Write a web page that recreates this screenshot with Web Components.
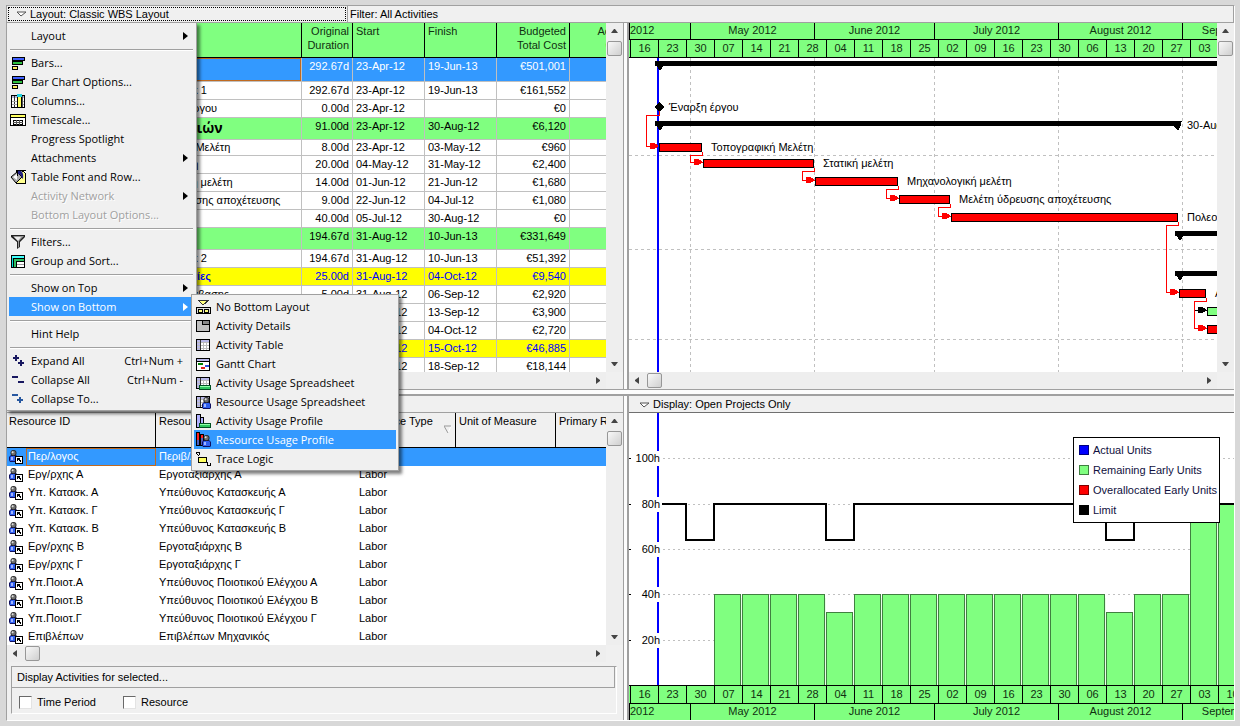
<!DOCTYPE html>
<html lang="en">
<head>
<meta charset="utf-8">
<title>Project layout</title>
<style>
  html { --face: #f0f0f0; --line: #a0a0a0; --green: #80ff80; --select: #3399ff; --text: #000; }
  body { margin: 0; background: #d8d8d8; font: 11px/14px "Liberation Sans", Arial, sans-serif; color: #000; }
</style>
</head>
<body>
<project-window></project-window>

<script>
const define = (name, html, setup) => {
  const template = document.createElement('template');
  template.innerHTML = html;
  customElements.define(name, class extends HTMLElement {
    constructor() {
      super();
      this.attachShadow({ mode: 'open' }).append(template.content.cloneNode(true));
    }
    connectedCallback() {
      if (setup && !this.ready) { this.ready = true; setup(this, this.shadowRoot); }
    }
  });
};

/* ---------- icons, 16 x 16 ---------- */
const r = (x, y, w, h, f) => `<rect x="${x}" y="${y}" width="${w}" height="${h}" fill="${f}"/>`;
const box = (x, y, w, h, f, b = '#000') => r(x, y, w, h, b) + r(x + 1, y + 1, w - 2, h - 2, f);
const gridIcon = box(1, 2, 14, 12, '#fff') + r(2, 3, 12, 2, '#b8b8e8') + r(2, 5, 3, 8, '#b8b8e8') +
  r(2, 5, 12, 1, '#bbb') + r(2, 8, 12, 1, '#bbb') + r(2, 11, 12, 1, '#bbb') + r(5, 3, 1, 10, '#333') + r(8, 5, 1, 8, '#bbb') + r(11, 5, 1, 8, '#bbb');
const person = (x, y) => `<g transform="translate(${x} ${y})" shape-rendering="auto">
  <path d="M0 10V7l2-2h5l2 2v4l-1 1H1z" fill="#101060"/><path d="M1 10V7l1-1h5l1 1v4H1z" fill="#3060f0"/><path d="M2 7h2v3H2z" fill="#a0b4ff"/>
  <circle cx="4.500" cy="3" r="3" fill="#222"/><circle cx="4.400" cy="3" r="2.300" fill="#707070"/><circle cx="3.600" cy="2.300" r="1" fill="#ddd"/></g>`;
const greenBar = box(4, 10, 12, 5, '#30c860', '#005020') + r(5, 11, 10, 1, '#90ffa8');
const icons = {
  bars: box(2, 2, 13, 4, '#4060ff') + box(2, 6, 11, 4, '#30c040') + box(2, 11, 6, 4, '#ffe860'),
  columns: box(1, 2, 14, 13, '#fff') + r(2, 3, 12, 2, '#b8b8d8') + r(4, 3, 1, 11, '#333') + r(2, 8, 12, 1, '#aaa') + r(2, 11, 12, 1, '#aaa') +
    r(12, 3, 1, 11, '#555') + box(7, 1, 5, 14, '#ffff60') + r(7, 1, 5, 3, '#20d0e0'),
  timescale: box(0, 2, 16, 12, '#fff') + r(1, 3, 14, 2, '#ffff60') + r(1, 5, 14, 1, '#000') + box(3, 8, 10, 5, '#fff') + r(6, 8, 1, 5, '#555') + r(9, 8, 1, 5, '#555') + r(3, 10, 10, 1, '#555'),
  font: `${box(6, 1, 10, 14, '#ffff90')}<path d="M11 1h5v4l-2-2z" fill="#fff" stroke="#000"/><g shape-rendering="auto"><path d="M1 8l6-5 5 5-6 6z" fill="#aaa" stroke="#000"/><path d="M3 8l4-3v6z" fill="#fff"/><path d="M8 2c4-1 6 2 5 8-2-1-1-5-5-5z" fill="#202080"/></g><path d="M7 1v6" stroke="#000"/>`,
  filter: `<g shape-rendering="auto"><path d="M1 1h14v2l-5 5v5l-3 2V8L1 3z" fill="#222"/><path d="M3 2h11L9 7v6l-1 1V7z" fill="#999"/><path d="M4 3h7L8 7z" fill="#eee"/></g>`,
  group: box(1, 2, 14, 13, '#00e0e0') + r(2, 3, 12, 2, '#40ffff') + box(3, 5, 12, 10, '#30c060') + box(6, 8, 9, 7, '#fff') + r(7, 11, 7, 1, '#999'),
  expand: r(3, 4, 6, 2, '#181860') + r(5, 2, 2, 6, '#181860') + r(8, 9, 6, 2, '#181860') + r(10, 7, 2, 6, '#181860'),
  collapse: r(2, 4, 6, 2, '#181860') + r(8, 9, 6, 2, '#181860'),
  collapseTo: r(2, 3, 6, 2, '#2858a0') + r(7, 8, 6, 2, '#2858a0') + r(9, 6, 2, 6, '#2858a0'),
  none: `<path d="M3 1h11L8 6z" fill="#ffff80" stroke="#333"/>${box(1, 8, 15, 7, '#ddd')}${box(3, 10, 5, 4, '#ffff80')}${box(9, 10, 5, 4, '#ffff80')}`,
  details: box(1, 2, 14, 12, '#c0c0c0') + r(7, 3, 7, 3, '#888') + r(7, 3, 1, 3, '#000') + r(7, 6, 7, 1, '#000'),
  table: gridIcon,
  gantt: box(1, 2, 14, 13, '#fff') + r(2, 3, 12, 2, '#b8b8e8') + r(1, 5, 14, 1, '#000') + r(3, 7, 5, 2, '#008000') + r(6, 11, 4, 2, '#e02020') + r(10, 9, 4, 2, '#3050e0'),
  actSheet: gridIcon + greenBar,
  resSheet: gridIcon + person(7, 3),
  actProfile: box(1, 1, 5, 14, '#b0b0ff') + box(5, 4, 4, 11, '#b0b0ff') + greenBar,
  resProfile: box(1, 0, 4, 14, '#5060c0') + r(2, 1, 2, 7, '#ff2020') + box(5, 2, 4, 12, '#5060c0') + r(6, 3, 2, 3, '#ff2020') + person(7, 3),
  trace: `${box(3, 6, 9, 6, '#ffff60')}<path d="M1 1h3v3M1 2l3 3M12 11v3h3M15 12v3" fill="none" stroke="#000"/>`,
  resource: person(1, 1) + box(7, 7, 8, 8, '#fff') + `<path d="M9 9h3v1h-1l2 2-1 1-2-2v1H9z" fill="#000"/>`
};
const icon = name => `<svg width="16" height="16" viewBox="0 0 16 16" shape-rendering="crispEdges" aria-hidden="true">${icons[name] || ''}</svg>`;

/* ---------- scroll bar ---------- */
define('scroll-bar', `
<style>
  :host { display: flex; background: #eee; }
  :host([vertical]) { flex-direction: column; width: 17px; }
  :host(:not([vertical])) { height: 17px; }
  button { all: unset; flex: none; width: 17px; height: 17px; display: grid; place-items: center; }
  .thumb { flex: none; width: 15px; height: 15px; margin: 1px; box-sizing: border-box; border: 1px solid #979797; border-radius: 2px; background: linear-gradient(135deg, #f8f8f8, #cfcfcf); }
  .gap { flex: 1; }
  svg { fill: #444; }
  :host([vertical]) svg { transform: rotate(90deg); }
</style>
<button aria-label="Scroll back"><svg width="7" height="7"><path d="M5 0v7L1 4V3z"/></svg></button>
<div class="thumb"></div><div class="gap"></div>
<button aria-label="Scroll forward"><svg width="7" height="7"><path d="M2 0v7l4-3V3z"/></svg></button>`);

/* ---------- menus ---------- */
define('menu-list', `
<style>
  :host { display: block; box-sizing: border-box; position: absolute; padding: 2px; background: var(--face); border: 1px solid var(--line); box-shadow: 3px 3px 3px rgba(0,0,0,.5); font: 11px/19px "Open Sans", "Noto Sans", sans-serif; }
</style>
<div role="menu"><slot></slot></div>`);

define('menu-item', `
<style>
  :host { display: block; position: relative; color: #000; }
  button { all: unset; box-sizing: border-box; width: 100%; height: 19px; padding: 0 9px 0 1px; display: flex; align-items: center; gap: 5px; white-space: nowrap; }
  :host([active]) button { background: var(--select); color: #fff; }
  :host([disabled]) button { color: #a0a0a0; text-shadow: 1px 1px #fff; }
  svg { flex: none; }
  .icon { display: contents; }
  .label { flex: 1; }
  .key { padding-right: 2px; }
  .key:empty, .arrow { display: none; }
  :host([more]) .arrow { display: block; fill: #000; margin-right: -3px; }
  :host([more][active]) .arrow { fill: #fff; }
</style>
<button role="menuitem"><span class="icon"></span><span class="label"><slot></slot></span><span class="key"></span><svg class="arrow" width="5" height="8"><path d="M0 0l5 4-5 4z"/></svg></button>
<slot name="submenu"></slot>`,
(el, root) => {
  root.querySelector('.icon').innerHTML = icon(el.getAttribute('icon'));
  root.querySelector('.key').textContent = el.getAttribute('key') || '';
});

define('menu-separator', `
<style>:host { display: block; height: 8px; padding: 4px 1px 2px; box-sizing: border-box; } hr { margin: 0; border: 0; height: 1px; background: var(--line); border-bottom: 1px solid #fff; }</style><hr>`);

/* ---------- layout bar with its open menu ---------- */
define('layout-bar', `
<style>
  :host { display: flex; position: relative; z-index: 5; box-sizing: border-box; height: 17px; background: var(--face); border-bottom: 1px solid var(--line); border-right: 1px solid var(--line); }
  .drop { all: unset; box-sizing: border-box; flex: none; width: 338px; height: 14px; margin: 1px; border: 1px dotted #000; display: flex; align-items: center; gap: 4px; padding-left: 8px; }
  .filter { border-left: 1px solid var(--line); padding-left: 2px; line-height: 16px; }
  .main { left: -1px; top: 16px; width: 191px; padding-top: 3px; }
  .sub { left: 182px; top: -3px; width: 208px; }
</style>
<button class="drop" aria-expanded="true"><svg width="9" height="6"><path d="M0 1h9L4 5z" fill="#fff" stroke="#555"/></svg>Layout: Classic WBS Layout</button>
<span class="filter">Filter: All Activities</span>
<menu-list class="main">
  <menu-item more>Layout</menu-item>
  <menu-separator></menu-separator>
  <menu-item icon="bars">Bars...</menu-item>
  <menu-item icon="bars">Bar Chart Options...</menu-item>
  <menu-item icon="columns">Columns...</menu-item>
  <menu-item icon="timescale">Timescale...</menu-item>
  <menu-item>Progress Spotlight</menu-item>
  <menu-item more>Attachments</menu-item>
  <menu-item icon="font">Table Font and Row...</menu-item>
  <menu-item disabled more>Activity Network</menu-item>
  <menu-item disabled>Bottom Layout Options...</menu-item>
  <menu-separator></menu-separator>
  <menu-item icon="filter">Filters...</menu-item>
  <menu-item icon="group">Group and Sort...</menu-item>
  <menu-separator></menu-separator>
  <menu-item more>Show on Top</menu-item>
  <menu-item more active>Show on Bottom
    <menu-list class="sub" slot="submenu">
      <menu-item icon="none">No Bottom Layout</menu-item>
      <menu-item icon="details">Activity Details</menu-item>
      <menu-item icon="table">Activity Table</menu-item>
      <menu-item icon="gantt">Gantt Chart</menu-item>
      <menu-item icon="actSheet">Activity Usage Spreadsheet</menu-item>
      <menu-item icon="resSheet">Resource Usage Spreadsheet</menu-item>
      <menu-item icon="actProfile">Activity Usage Profile</menu-item>
      <menu-item icon="resProfile" active>Resource Usage Profile</menu-item>
      <menu-item icon="trace">Trace Logic</menu-item>
    </menu-list>
  </menu-item>
  <menu-separator></menu-separator>
  <menu-item>Hint Help</menu-item>
  <menu-separator></menu-separator>
  <menu-item icon="expand" key="Ctrl+Num +">Expand All</menu-item>
  <menu-item icon="collapse" key="Ctrl+Num -">Collapse All</menu-item>
  <menu-item icon="collapseTo">Collapse To...</menu-item>
</menu-list>`);

/* ---------- activity table ---------- */
const activities = [
  ['selected tall', 3, '', '292.67d', '23-Apr-12', '19-Jun-13', '€501,001'],
  ['', 3, 'Net Hammock 1', '292.67d', '23-Apr-12', '19-Jun-13', '€161,552'],
  ['', 3, 'Έναρξη του έργου', '0.00d', '23-Apr-12', '', '€0'],
  ['wbs', 3, 'Φάση αδειών', '91.00d', '23-Apr-12', '30-Aug-12', '€6,120'],
  ['short', 3, 'Τοπογραφική Μελέτη', '8.00d', '23-Apr-12', '03-May-12', '€960'],
  ['', 3, 'Στατική μελέτη', '20.00d', '04-May-12', '31-May-12', '€2,400'],
  ['', 3, 'Μηχανολογική μελέτη', '14.00d', '01-Jun-12', '21-Jun-12', '€1,680'],
  ['', 3, 'Μελέτη ύδρευσης αποχέτευσης', '9.00d', '22-Jun-12', '04-Jul-12', '€1,080'],
  ['', 3, '', '40.00d', '05-Jul-12', '30-Aug-12', '€0'],
  ['wbs', 3, '', '194.67d', '31-Aug-12', '10-Jun-13', '€331,649'],
  ['', 3, 'Net Hammock 2', '194.67d', '31-Aug-12', '10-Jun-13', '€51,392'],
  ['phase', 3, 'Οι προεργασίες', '25.00d', '31-Aug-12', '04-Oct-12', '€9,540'],
  ['', 3, 'Εργασίες κατάβασης', '5.00d', '31-Aug-12', '06-Sep-12', '€2,920'],
  ['', 3, '', '5.00d', '07-Sep-12', '13-Sep-12', '€3,900'],
  ['', 3, '', '20.00d', '07-Sep-12', '04-Oct-12', '€2,720'],
  ['phase', 3, '', '32.00d', '31-Aug-12', '15-Oct-12', '€46,885'],
  ['', 3, '', '13.00d', '31-Aug-12', '18-Sep-12', '€18,144']
];
define('activity-table', `
<style>
  :host { display: block; overflow: hidden; background: #fff; }
  table { border-collapse: separate; border-spacing: 0; table-layout: fixed; width: 625px; }
  th, td { box-sizing: border-box; padding: 0 3px; text-align: left; vertical-align: top; white-space: nowrap; overflow: hidden; border-right: 1px solid silver; }
  th { font-weight: normal; height: 35px; padding-top: 1px; background: var(--green); border-right-color: #000; border-bottom: 1px solid #000; color: #103010; }
  td { height: 18px; line-height: 16px; border-bottom: 1px solid silver; }
  .num { text-align: right; }
  .short td { height: 16px; line-height: 15px; }
  .tall td { height: 24px; }
  .selected td { background: var(--select); color: #fff; }
  .selected td:first-child { box-shadow: inset 0 0 0 1px #c06a20; }
  .wbs td { height: 22px; background: var(--green); }
  .wbs td:first-child { font: bold 14px/20px "Open Sans", sans-serif; }
  .phase td { background: #ff0; color: #00f; }
  .phase td:first-child { font-weight: bold; }
  .level3 { padding-left: 121px; }
</style>
<table>
  <colgroup><col style="width:295px"><col style="width:51px"><col style="width:72px"><col style="width:72px"><col style="width:73px"><col style="width:62px"></colgroup>
  <thead><tr><th></th><th class="num">Original<br>Duration</th><th>Start</th><th>Finish</th><th class="num">Budgeted<br>Total Cost</th><th class="num">Actual<br>Cost</th></tr></thead>
  <tbody></tbody>
</table>`,
(el, root) => {
  root.querySelector('tbody').innerHTML = activities.map(([kind, level, name, dur, start, finish, cost]) =>
    `<tr class="${kind}"><td class="level${level}">${name}</td><td class="num">${dur}</td><td>${start}</td><td>${finish}</td><td class="num">${cost}</td><td></td></tr>`).join('');
});

/* ---------- time scale ---------- */
define('time-scale', `
<style>
  :host { display: flex; flex-direction: column; height: 35px; overflow: hidden; background: var(--green); color: #103010; box-sizing: border-box; }
  :host([below]) { flex-direction: column-reverse; }
  .row { display: flex; text-align: center; box-sizing: border-box; }
  .row > span { flex: none; box-sizing: border-box; border-left: 1px solid #000; }
  .months { height: 16px; line-height: 15px; }
  .weeks { height: 19px; line-height: 17px; border: solid #000; border-width: 1px 0; padding-left: 1px; }
  .weeks > span { width: 28px; }
  .months > span:first-child { text-align: left; }
</style>
<div class="row months"></div><div class="row weeks"></div>`,
(el, root) => {
  const months = [['2012', 61], ['May 2012', 124], ['June 2012', 120], ['July 2012', 124], ['August 2012', 124], ['September 2012', 120]];
  root.querySelector('.months').innerHTML = months.map(([m, w]) => `<span style="width:${w}px">${m}</span>`).join('');
  root.querySelector('.weeks').innerHTML = '16 23 30 07 14 21 28 04 11 18 25 02 09 16 23 30 06 13 20 27 03 10'.split(' ').map(w => `<span>${w}</span>`).join('');
});

/* ---------- gantt chart ---------- */
define('gantt-chart', `
<style>
  :host { display: flex; flex-direction: column; overflow: hidden; background: #fff; }
  svg { display: block; flex: 1; min-height: 0; width: 100%; font: 11px "Liberation Sans", Arial, sans-serif; }
</style>
<time-scale></time-scale>
<svg role="img" aria-label="Gantt chart"><g transform="translate(-629 -58)" shape-rendering="crispEdges"></g></svg>`,
(el, root) => {
  const out = [];
  const months = [690, 814, 934, 1058, 1182];
  months.forEach(x => out.push(`<path d="M${x} 58v600" stroke="silver" stroke-dasharray="3 3"/>`));
  [155, 249, 339].forEach(y => out.push(`<path d="M629 ${y}h1400" stroke="silver" stroke-dasharray="3 3"/>`));
  out.push(r(657, 58, 2, 600, '#00f'));
  const summary = (x, y, end) => {
    out.push(r(x, y, end - x, 5, '#000'), `<path d="M${x} ${y}h8v5l-2 4h-2z"/>`);
    if (end < 1200) out.push(`<path d="M${end + 1} ${y}l-3 9h-2l-4-5z"/>`);
  };
  summary(655, 61, 2000);
  summary(655, 121, 1181);
  summary(1175, 231, 2000);
  summary(1175, 271, 2000);
  out.push('<path d="M659 102l5 5-5 5-5-5z"/>');
  const bar = (x, y, end, color = '#f00') => out.push(box(x, y, end - x, 9, color));
  const link = (d, x, y, color = '#f00') => out.push(`<path d="${d}" fill="none" stroke="${color}"/><path d="M${x - 9} ${y - 3}h4l4 2v2l-4 2h-4z" fill="${color}"/>`);
  link('M659 111v4H646v31h12', 659, 146);
  [[659, 143, 702], [703, 159, 814], [815, 177, 898], [899, 195, 950], [951, 213, 1178]].forEach(([x, y, end], i, all) => {
    bar(x, y, end);
    const next = all[i + 1];
    if (next) link(`M${end} ${y + 9}v3h-12V${next[1] + 3}H${next[0]}`, next[0], next[1] + 3);
  });
  link('M1178 222v3h-12v67h13', 1179, 292);
  bar(1179, 289, 1206);
  link('M1206 298v3h-12v27h13', 1207, 328);
  link('M1195 310h12', 1207, 310, '#000');
  bar(1207, 307, 1260, '#80ff80');
  bar(1207, 325, 1260);
  [['Έναρξη έργου', 669, 111], ['30-Aug-12', 1187, 129], ['Τοπογραφική Μελέτη', 711, 151], ['Στατική μελέτη', 823, 167],
   ['Μηχανολογική μελέτη', 907, 185], ['Μελέτη ύδρευσης αποχέτευσης', 959, 203], ['Πολεοδομία', 1187, 221], ['Α', 1215, 297]]
    .forEach(([t, x, y]) => out.push(`<text x="${x}" y="${y}">${t}</text>`));
  root.querySelector('g').innerHTML = out.join('');
});

/* ---------- resource table ---------- */
const resources = [
  ['Περ/λογος', 'Περιβ/λόγος', 'Labor'], ['Εργ/ρχης Α', 'Εργοταξιάρχης Α', 'Labor'], ['Υπ. Κατασκ. Α', 'Υπεύθυνος Κατασκευής Α', 'Labor'],
  ['Υπ. Κατασκ. Γ', 'Υπεύθυνος Κατασκευής Γ', 'Labor'], ['Υπ. Κατασκ. Β', 'Υπεύθυνος Κατασκευής Β', 'Labor'], ['Εργ/ρχης Β', 'Εργοταξιάρχης Β', 'Labor'],
  ['Εργ/ρχης Γ', 'Εργοταξιάρχης Γ', 'Labor'], ['Υπ.Ποιοτ.Α', 'Υπεύθυνος Ποιοτικού Ελέγχου Α', 'Labor'], ['Υπ.Ποιοτ.Β', 'Υπεύθυνος Ποιοτικού Ελέγχου Β', 'Labor'],
  ['Υπ.Ποιοτ.Γ', 'Υπεύθυνος Ποιοτικού Ελέγχου Γ', 'Labor'], ['Επιβλέπων', 'Επιβλέπων Μηχανικός', 'Labor']
];
define('resource-table', `
<style>
  :host { display: block; overflow: hidden; background: #fff; }
  table { border-collapse: separate; border-spacing: 0; table-layout: fixed; width: 669px; }
  th, td { box-sizing: border-box; padding: 0 3px; text-align: left; vertical-align: top; white-space: nowrap; overflow: hidden; }
  th { height: 35px; padding: 1px 2px; font-weight: normal; background: var(--face); border: solid #000; border-width: 0 1px 1px 0; }
  th + th { padding-left: 3px; }
  td { height: 18px; line-height: 17px; }
  .id { padding: 0; }
  .id div { display: flex; height: 18px; gap: 2px; padding-left: 1px; }
  .id svg { padding-top: 1px; }
  .id span { flex: 1; padding-left: 2px; }
  .selected td { background: var(--select); color: #fff; }
  .selected .id span { border: 1px solid #c06a20; padding-left: 1px; line-height: 15px; }
  .sort { float: right; margin: 11px 1px 0 0; }
</style>
<table>
  <colgroup><col style="width:149px"><col style="width:200px"><col style="width:100px"><col style="width:100px"><col style="width:120px"></colgroup>
  <thead><tr><th>Resource ID</th><th>Resource Name</th><th>Resource Type<svg class="sort" width="8" height="9"><path d="M7 1L4 8" stroke="#fff"/><path d="M7 1H0l4 7" fill="none" stroke="#999"/></svg></th><th>Unit of Measure</th><th>Primary Role</th></tr></thead>
  <tbody></tbody>
</table>`,
(el, root) => {
  root.querySelector('tbody').innerHTML = resources.map(([id, name, type], i) =>
    `<tr class="${i ? '' : 'selected'}"><td class="id"><div>${icon('resource')}<span>${id}</span></div></td><td>${name}</td><td>${type}</td><td></td><td></td></tr>`).join('');
});

/* ---------- selection panel ---------- */
define('selection-panel', `
<style>
  :host { display: block; padding: 4px 6px 6px 4px; height: 58px; box-sizing: border-box; background: var(--face); }
  fieldset { margin: 0; padding: 0; height: 48px; box-sizing: border-box; border: 1px solid; border-color: var(--line) #fff #fff var(--line); }
  .title { height: 20px; line-height: 20px; padding-left: 5px; border: solid var(--line); border-width: 0 1px 1px 0; margin-right: 1px; }
  .checks { display: flex; padding-left: 7px; }
  label { display: flex; align-items: center; height: 28px; gap: 5px; width: 104px; }
  input { appearance: none; margin: 0; width: 13px; height: 13px; box-sizing: border-box; background: #fff; border: 1px solid; border-color: #696969 #e3e3e3 #e3e3e3 #696969; }
</style>
<fieldset aria-labelledby="t">
  <div class="title" id="t">Display Activities for selected...</div>
  <div class="checks"><label><input type="checkbox">Time Period</label><label><input type="checkbox">Resource</label></div>
</fieldset>`);

/* ---------- legend ---------- */
define('chart-legend', `
<style>
  :host { display: block; position: absolute; top: 24px; right: 14px; box-sizing: border-box; width: 147px; padding: 2px 0 2px 5px; background: #fff; border: 1px solid #000; color: #101040; }
  ul { margin: 0; padding: 0; list-style: none; }
  li { display: flex; align-items: center; gap: 4px; height: 20px; white-space: nowrap; }
  i { flex: none; width: 10px; height: 10px; box-sizing: border-box; border: 1px solid rgba(0,0,0,.5); }
</style>
<ul>
  <li><i style="background:#00f"></i>Actual Units</li>
  <li><i style="background:#80ff80"></i>Remaining Early Units</li>
  <li><i style="background:#f00"></i>Overallocated Early Units</li>
  <li><i style="background:#000"></i>Limit</li>
</ul>`);

/* ---------- resource usage profile ---------- */
define('usage-profile', `
<style>
  :host { display: flex; flex-direction: column; position: relative; overflow: hidden; background: #fff; }
  svg { display: block; flex: 1; min-height: 0; width: 100%; font: 11px "Liberation Sans", Arial, sans-serif; }
</style>
<svg role="img" aria-label="Resource usage profile"><g transform="translate(-629 -413)" shape-rendering="crispEdges"></g></svg>
<time-scale below></time-scale>
<chart-legend></chart-legend>`,
(el, root) => {
  const out = [];
  const levels = [[100, 458], [80, 504], [60, 549], [40, 594], [20, 640]];
  levels.forEach(([, y]) => out.push(`<path d="M663 ${y}h1400" stroke="silver" stroke-dasharray="2 3"/>`));
  for (let x = 714; x <= 1218; x += 28) {
    const top = x >= 1190 ? 504 : (x === 826 || x === 1106) ? 612 : 594;
    out.push(r(x + 27, top + 4, 1, 685 - top, '#e8ffe8'), box(x, top, 27, 687 - top, '#80ff80', '#408040'));
  }
  out.push('<path d="M662 504h24v36h28v-36h112v36h28v-36h252v36h28v-36h900" fill="none" stroke="#000" stroke-width="2"/>');
  out.push(r(657, 413, 2, 272, '#00f'));
  levels.forEach(([n, y]) => out.push(r(629, y, 2, 1, '#000'), r(635, y - 7, 27, 15, '#fff'), `<text x="660" y="${y + 4}" text-anchor="end">${n}h</text>`));
  root.querySelector('g').innerHTML = out.join('');
});

/* ---------- window ---------- */
define('project-window', `
<style>
  :host { display: grid; box-sizing: border-box; height: calc(100vh - 10px); margin: 5px 5px 5px 6px; border: solid; border-width: 1px; border-color: var(--line) #fff #fff var(--line);
    grid-template: auto minmax(0, 1fr) 7px 324px / minmax(0, 617fr) 3px minmax(0, 607fr); background: var(--face); }
  layout-bar, .split { grid-column: 1 / -1; }
  .split { border: solid var(--line); border-width: 1px 0 2px; background: #fcfcfc; }
  .gutter { background: #fcfcfc; }
  .pane { display: grid; min-width: 0; min-height: 0; }
  .left { border-right: 1px solid var(--line); }
  .right { border-left: 2px solid var(--line); }
  .upper { grid-template: minmax(0, 1fr) auto / minmax(0, 1fr) 17px; }
  .lower.left { grid-template: 17px minmax(0, 1fr) auto auto / minmax(0, 1fr) 17px; }
  .lower.right { grid-template: 17px minmax(0, 1fr) / minmax(0, 1fr); }
  .bar { grid-column: 1 / -1; box-sizing: border-box; border-bottom: 1px solid var(--line); line-height: 17px; }
  .lower.right .bar { border-bottom-color: #707070; }
  .bar button { all: unset; display: flex; align-items: center; gap: 4px; padding-left: 11px; }
  selection-panel { grid-column: 1 / -1; }
</style>
<layout-bar></layout-bar>
<section class="pane upper left"><activity-table></activity-table><scroll-bar vertical></scroll-bar><scroll-bar></scroll-bar></section>
<div class="gutter"></div>
<section class="pane upper right"><gantt-chart></gantt-chart><scroll-bar vertical></scroll-bar><scroll-bar></scroll-bar></section>
<div class="split"></div>
<section class="pane lower left"><div class="bar"></div><resource-table></resource-table><scroll-bar vertical></scroll-bar><scroll-bar></scroll-bar><selection-panel></selection-panel></section>
<div class="gutter"></div>
<section class="pane lower right"><div class="bar"><button><svg width="9" height="6"><path d="M0 1h9L4 5z" fill="#fff" stroke="#555"/></svg>Display: Open Projects Only</button></div><usage-profile></usage-profile></section>`);
</script>
</body>
</html>
